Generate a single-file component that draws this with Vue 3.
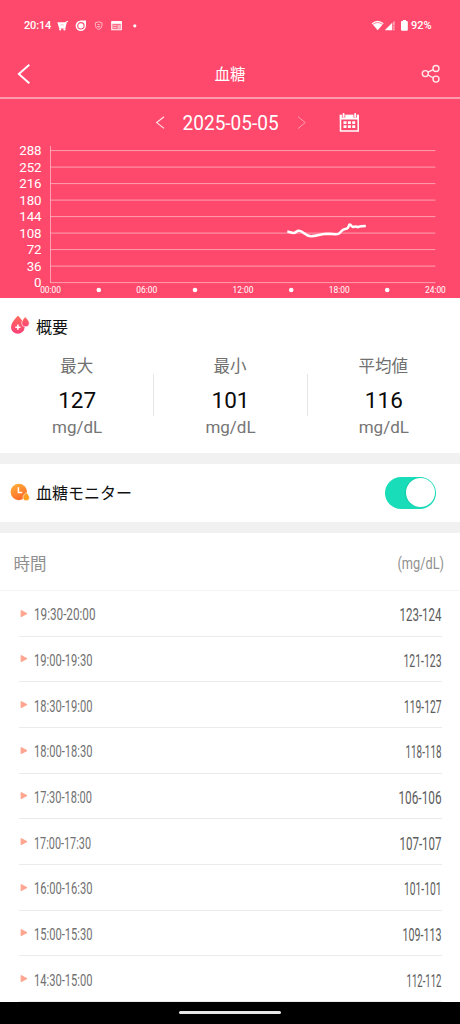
<script setup>
const ticks = [288, 252, 216, 180, 144, 108, 72, 36, 0].map((label, i) => ({
  label,
  y: 150.6 + i * 16.5,
}))
const hours = ['00:00', '06:00', '12:00', '18:00', '24:00'].map((label, i) => ({
  label,
  x: 50.6 + i * 96.2,
}))
const dots = [98.8, 195, 291.2, 387.2]
const stats = [
  { label: '最大', value: 127 },
  { label: '最小', value: 101 },
  { label: '平均値', value: 116 },
]
const rows = [
  { time: '19:30-20:00', tw: 61.5, value: '123-124', vw: 42 },
  { time: '19:00-19:30', tw: 58.5, value: '121-123', vw: 38 },
  { time: '18:30-19:00', tw: 58.5, value: '119-127', vw: 37.5 },
  { time: '18:00-18:30', tw: 58.5, value: '118-118', vw: 36 },
  { time: '17:30-18:00', tw: 58, value: '106-106', vw: 43 },
  { time: '17:00-17:30', tw: 57, value: '107-107', vw: 42 },
  { time: '16:00-16:30', tw: 58.5, value: '101-101', vw: 37.5 },
  { time: '15:00-15:30', tw: 58.5, value: '109-113', vw: 39 },
  { time: '14:30-15:00', tw: 58.5, value: '112-112', vw: 35 },
]
</script>

<template>
  <div class="screen">
    <header class="top">
      <div class="status">
        <span class="clock">20:14</span>
        <svg class="notif" width="84" height="14" viewBox="0 0 84 14" fill="#fff">
          <path d="M.4 2.2H8.4L9 1.4L10.9 .7L11.2 1.5L9.8 2.2L8.4 8.4H2.2Z" />
          <path d="M3.4 4.9H6.8" stroke="#ff8ea3" stroke-width=".6" />
          <circle cx="3.2" cy="9.4" r="1.1" /><circle cx="7.4" cy="9.4" r="1.1" />
          <path d="M23.8 .6H29V5.8A5.2 5.2 0 1 1 23.8 .6Z" />
          <circle cx="23.9" cy="5.8" r="3.2" fill="none" stroke="#ff496c" stroke-width="1.1" />
          <path d="M38.4 2.8L41.7 1.8L45 2.8V5.5Q44.8 8.4 41.7 9.6Q38.6 8.4 38.4 5.5Z" fill="none" stroke="#ffc1cd" stroke-width=".9" />
          <path d="M39.6 4.1H43.8L41.7 5.1ZM40 6.6L41.7 5.7L43.4 6.6L41.7 7.8Z" fill="#ffc1cd" />
          <path d="M54.8 1.9H64.3V9.7H54.8Z" fill="#ff6c87" stroke="#fff" stroke-width="1.1" />
          <path d="M54.5 1.2H64.8V3.8H54.5Z" />
          <path d="M55.8 5H59.6V6H55.8ZM55.8 7.1H59.6V8H55.8ZM60.6 5H63.5V8.7H60.6Z" fill="#ffb3c1" />
          <circle cx="77.8" cy="5.8" r="1.6" />
        </svg>
        <svg class="signal" width="38" height="14" viewBox="0 0 38 14" fill="#fff">
          <path d="M-.3 3.2Q5.7-1.8 11.7 3.2L5.7 10.2Z" />
          <path d="M.8 4.3Q5.7 .8 10.6 4.3" fill="none" stroke="#ff496c" stroke-width=".7" />
          <path d="M12.8 10.2L20.2 2.8V10.2Z" />
          <path d="M22.7 .7V10.2H20.8V2.4Z" fill="#ffa4b5" />
          <path d="M20.9 5.7H22.8M20.9 8.3H22.8" stroke="#ff496c" stroke-width=".7" />
          <rect x="29" y="1" width="6.8" height="9.8" rx="1" /><rect x="30.8" y="0" width="3.2" height="2" />
        </svg>
        <span class="battery">92%</span>
      </div>
      <nav class="bar">
        <svg width="40" height="30" viewBox="0 0 40 30" fill="none" stroke="#fff" stroke-width="1.9">
          <path d="M29.3 5.8L18.8 15L29.3 24.3" />
        </svg>
        <h1>血糖</h1>
        <svg width="40" height="30" viewBox="0 0 40 30" fill="none" stroke="#ffe9ed" stroke-width="1.4">
          <circle cx="5.3" cy="14.6" r="3" /><circle cx="16" cy="9.5" r="3" /><circle cx="16" cy="20.1" r="3" />
          <path d="M8 13.2L13.3 10.7M8 16L13.3 18.8" />
        </svg>
      </nav>
    </header>

    <section class="chart">
      <svg width="460" height="199" viewBox="0 99 460 199">
        <path d="M164 116.8L156.7 122.6L164 128.4" fill="none" stroke="#ffe3e8" stroke-width="1.2" />
        <text class="date" x="182.6" y="130" textLength="96" lengthAdjust="spacingAndGlyphs">2025-05-05</text>
        <path d="M298 116.6L305.2 122.6L298 128.6" fill="none" stroke="#ff9bae" stroke-width="1" />
        <path d="M340.5 115.6H358.2V131H340.5Z" fill="none" stroke="#fff" stroke-width="1.5" />
        <rect x="339.8" y="114.9" width="19" height="4.6" fill="#fff" />
        <path d="M343.6 113V117.4M355.2 113V117.4" stroke="#ff496c" stroke-width="3.4" />
        <path d="M343.6 114V116.6M355.2 114V116.6" stroke="#fff" stroke-width="1.9" stroke-linecap="round" />
        <path d="M343.5 122.6H346.5M347.9 122.6H350.9M352.2 122.6H355.2M343.5 126.6H346.5M347.9 126.6H350.9M352.2 126.6H355.2" stroke="#fff" stroke-width="2.8" />
        <g v-for="t in ticks" :key="t.label">
          <line x1="50.6" x2="435.4" :y1="t.y" :y2="t.y" stroke="#fff" stroke-opacity=".48" />
          <text class="tick" x="41.6" :y="t.y + 4.7" text-anchor="end">{{ t.label }}</text>
        </g>
        <line x1="50.5" x2="50.5" y1="146" y2="283" stroke="#fff" stroke-opacity=".48" />
        <path d="M287.3 231.5C289.5 231.8 291.5 233 293.5 233C296 233 296 230.8 299 230.8C303.5 230.8 305 236.2 311 236.2C317.5 236.2 320.5 233.7 328.3 233.7C333 233.9 336 234.6 338.4 233.9C340.5 233 341.5 229.5 345 229C348 228.5 348.2 228 349.3 224.7C350.8 223.8 351 226.6 353 227C355 226.2 356 226.2 358 227.2C360 226.2 361 226.1 365.8 226.1" fill="none" stroke="#fff" stroke-width="2.5" />
        <text v-for="h in hours" :key="h.label" class="hour" :x="h.x" y="293.3" text-anchor="middle">{{ h.label }}</text>
        <circle v-for="d in dots" :key="d" :cx="d" cy="290" r="2.3" fill="#fff" />
      </svg>
    </section>

    <section class="summary">
      <div class="title">
        <svg width="20" height="20" viewBox="0 0 20 20">
          <defs>
            <linearGradient id="drop" x1="0" y1="0" x2="0" y2="1"><stop offset="0" stop-color="#ff6b5c" /><stop offset="1" stop-color="#fb4078" /></linearGradient>
          </defs>
          <path d="M8 .8C6 2.6 1 7.6 1 12.2A6.8 6.6 0 0 0 14.6 12.2C14.6 7.6 10 2.6 8 .8Z" fill="url(#drop)" />
          <path d="M15.2 1.8C14 3 11.7 5.8 11.7 8.2A3.8 3.6 0 0 0 19.3 8.2C19.3 5.8 16.4 3 15.2 1.8Z" fill="url(#drop)" stroke="#fff" stroke-width=".6" />
          <path d="M7.9 9.6V14.8M5.3 12.2H10.5" stroke="#fff" stroke-width="1.6" />
        </svg>
        <h2>概要</h2>
      </div>
      <div class="stats">
        <div v-for="s in stats" :key="s.label" class="stat">
          <span class="label">{{ s.label }}</span>
          <strong>{{ s.value }}</strong>
          <span class="unit">mg/dL</span>
        </div>
      </div>
    </section>

    <section class="monitor">
      <div class="title">
        <svg width="20" height="20" viewBox="0 0 20 20">
          <defs>
            <linearGradient id="clock" x1="0" y1="0" x2=".5" y2="1"><stop offset="0" stop-color="#ffb43b" /><stop offset="1" stop-color="#ff6b28" /></linearGradient>
          </defs>
          <circle cx="8.8" cy="9" r="8.2" fill="url(#clock)" />
          <path d="M8.4 4.3V9.4H12.2" fill="none" stroke="#fff" stroke-width="1.5" />
          <path d="M16.2 9.5C15 10.8 12.9 12.8 12.9 14.6A3.2 3.1 0 0 0 19.5 14.6C19.5 12.8 17.4 10.8 16.2 9.5Z" fill="#ff9e1e" stroke="#fff" stroke-width=".6" />
        </svg>
        <h2>血糖モニター</h2>
      </div>
      <div class="switch"><i></i></div>
    </section>

    <section class="records">
      <div class="head">
        <span>時間</span>
        <svg width="48" height="26"><text x="0.5" y="18.6" class="head-unit" textLength="46.5" lengthAdjust="spacingAndGlyphs">(mg/dL)</text></svg>
      </div>
      <div v-for="r in rows" :key="r.time" class="row">
        <svg class="arrow" width="9" height="9" viewBox="0 0 9 9"><path d="M2.1 1.5L8 4.6L2.1 7.7Z" fill="#ffa590" stroke="#ffa590" stroke-linejoin="round" /></svg>
        <svg width="90" height="26"><text x="0" y="19.9" class="time" :textLength="r.tw" lengthAdjust="spacingAndGlyphs">{{ r.time }}</text></svg>
        <svg class="value" width="80" height="26"><text :x="79.5 - r.vw" y="20.5" :textLength="r.vw" lengthAdjust="spacingAndGlyphs">{{ r.value }}</text></svg>
      </div>
    </section>

    <footer class="gesture"><i></i></footer>
  </div>
</template>

<style>
body { margin: 0; background: #fff; }
</style>

<style scoped>
.screen {
  width: 460px;
  height: 1024px;
  display: flex;
  flex-direction: column;
  overflow: hidden;
  font-family: Roboto, "Noto Sans CJK JP", sans-serif;
  background: #fff;
  color: #111;
}
svg { display: block; flex: none; overflow: visible; }
h1, h2 { margin: 0; font-weight: 400; }
.top {
  box-sizing: border-box;
  height: 99px;
  flex: none;
  background: #ff496c;
  border-bottom: 2px solid #ff9bae;
  color: #fff;
}
.status {
  display: flex;
  align-items: center;
  height: 50px;
  padding: 0 26px 0 24px;
  box-sizing: border-box;
  font-size: 11px;
  font-weight: 500;
}
.clock { width: 33px; white-space: nowrap; letter-spacing: -.15px; }
.notif { margin-top: 3px; }
.signal { margin: 3px 1px 0 auto; }
.battery { width: 23px; }
.bar { display: flex; align-items: center; justify-content: space-between; height: 48px; }
.bar svg { margin-top: -1px; }
h1 { font-size: 15.5px; line-height: 24px; color: #fff; margin-top: 2px; }
.chart { height: 199px; flex: none; background: #ff496c; }
.date { font-size: 19.6px; fill: #fff; }
.tick { font-size: 13.3px; fill: #fff; }
.hour { font-size: 8.4px; fill: #fff; }
.summary { height: 155px; flex: none; border-bottom: 11px solid #f1f1f1; }
.title { display: flex; align-items: center; gap: 6px; padding-left: 10px; }
.summary .title { height: 54px; }
h2 { font-size: 16px; line-height: 24px; color: #111; margin-top: 5px; }
.stats { display: grid; grid-template-columns: repeat(3, 1fr); }
.stat { position: relative; display: flex; flex-direction: column; align-items: center; }
.stat + .stat::before {
  content: "";
  position: absolute;
  left: 0;
  top: 22px;
  width: 1px;
  height: 42px;
  background: #e6e6e6;
}
.label { font-size: 16.5px; line-height: 26px; margin-top: 2px; color: #707070; }
.stat strong { font-size: 22.5px; font-weight: 400; line-height: 45px; margin: -2px 0 0 1px; color: #0a0a0a; }
.unit { font-size: 17px; line-height: 20px; margin: -6px 0 0 1px; color: #757575; }
.monitor {
  height: 57.5px;
  flex: none;
  display: flex;
  align-items: center;
  justify-content: space-between;
  border-bottom: 11px solid #f1f1f1;
}
.monitor h2 { margin-top: 2px; }
.switch {
  box-sizing: border-box;
  display: flex;
  justify-content: flex-end;
  width: 51px;
  height: 32.5px;
  margin-right: 24px;
  padding: 1.6px 1px;
  border-radius: 17px;
  background: #19dcb9;
}
.switch i { width: 29.2px; height: 29.2px; border-radius: 50%; background: #fff; box-shadow: -1px 0 1px rgba(0, 100, 80, .15); }
.records { flex: 1; min-height: 0; overflow: hidden; }
.head {
  box-sizing: border-box;
  height: 58.5px;
  display: flex;
  align-items: center;
  justify-content: space-between;
  padding: 3px 15px 0 13.5px;
  border-bottom: 1px solid #f4f4f4;
  font-size: 16.5px;
  color: #909090;
}
.head-unit { font-size: 17px; fill: #909090; }
.row {
  box-sizing: border-box;
  height: 45.67px;
  margin: 0 18.5px 0 19px;
  display: flex;
  align-items: center;
  border-bottom: 1px solid #ebebeb;
}
.arrow { margin-right: 6px; }
.time { font-size: 16px; fill: #707070; }
.value { margin-left: auto; font-size: 18px; fill: #5c5c5c; }
.gesture {
  height: 22.5px;
  flex: none;
  display: flex;
  justify-content: center;
  align-items: center;
  background: #000;
}
.gesture i { width: 102px; height: 3.4px; border-radius: 2px; background: #e8e8e8; }
</style>
